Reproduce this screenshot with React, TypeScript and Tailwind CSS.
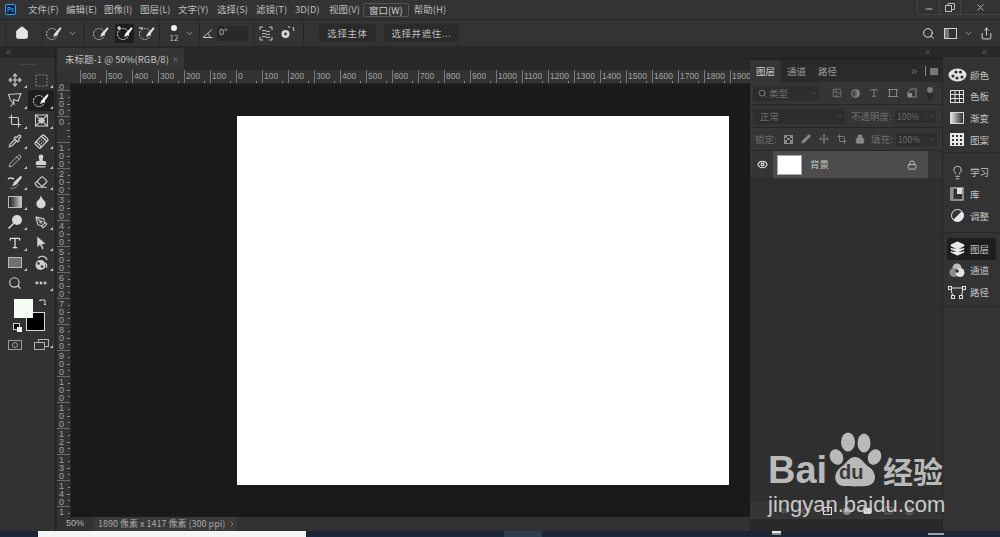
import type { ReactNode } from 'react'
import {
  Bandage,
  ChevronDown,
  ChevronRight,
  ChevronsLeft,
  ChevronsRight,
  Crop,
  Droplet,
  Ellipsis,
  Eraser,
  Eye,
  FolderClosed,
  Home,
  Image as ImageIcon,
  Layers,
  Lightbulb,
  Link2,
  Lock,
  Minus,
  Move,
  PenTool,
  Pencil,
  Pipette,
  Search,
  Share,
  SquareDashed,
  SquarePlus,
  Stamp,
  Trash2,
  Type,
  X,
} from 'lucide-react'

const cjk = { fontFamily: '"Noto Sans CJK SC", "Liberation Sans", sans-serif' }
const latin = { fontFamily: '"Liberation Sans", sans-serif' }

const menus = [
  { label: '文件(F)', w: 'w-[38px]' },
  { label: '编辑(E)', w: 'w-[38px]' },
  { label: '图像(I)', w: 'w-[36px]' },
  { label: '图层(L)', w: 'w-[38px]' },
  { label: '文字(Y)', w: 'w-[39px]' },
  { label: '选择(S)', w: 'w-[39px]' },
  { label: '滤镜(T)', w: 'w-[39px]' },
  { label: '3D(D)', w: 'w-[34px]' },
  { label: '视图(V)', w: 'w-[35px]' },
]

const hLabels = ['600', '500', '400', '300', '200', '100', '0', '100', '200', '300', '400', '500', '600', '700', '800', '900', '1000', '1100', '1200', '1300', '1400', '1500', '1600', '1700', '1800', '1900']
// the ruler only has room for three stacked digits, so 1000 and up read as 100/110/...
const vLabels = ['100', '0', '100', '200', '300', '400', '500', '600', '700', '800', '900', '100', '100', '120', '130', '140', '1']

function QuickSel({ mode, bright }: { mode?: '+' | '-'; bright?: boolean }) {
  return (
    <svg width="18" height="16" viewBox="0 0 18 16" fill="none">
      <circle cx="7" cy="9" r="5.5" stroke={bright ? '#e8e8e8' : '#c4c4c4'} strokeWidth="1" strokeDasharray="2 1" />
      <path d="M15.5 2 L9.5 8.5 L8 12 L11.5 10.5 L16.5 3.5 Z" fill={bright ? '#ffffff' : '#e4e4e4'} />
      {mode === '+' && <path d="M3 1v4M1 3h4" stroke="#fff" strokeWidth="1" />}
      {mode === '-' && <path d="M1 3h4" stroke="#fff" strokeWidth="1" />}
    </svg>
  )
}

function Lasso() {
  return (
    <svg width="16" height="16" viewBox="0 0 16 16" fill="none" stroke="#c8c8c8" strokeWidth="1.1">
      <path d="M1.5 2.5 L14 1.5 L11 9 L6.5 7.5 L7 12 L3.5 8 Z" />
      <path d="M3.5 14.5 L6.5 11" />
    </svg>
  )
}

function FrameTool() {
  return (
    <svg width="15" height="15" viewBox="0 0 15 15" fill="none" stroke="#c8c8c8" strokeWidth="1.1">
      <rect x="1.5" y="2" width="12" height="11" />
      <path d="M1.5 2 L13.5 13 M13.5 2 L1.5 13" />
      <path d="M4.5 7.5 L7.5 4.8 L10.5 7.5 L7.5 10.2 Z" fill="#c8c8c8" />
    </svg>
  )
}

function HealBrush() {
  return (
    <svg width="16" height="16" viewBox="0 0 16 16" fill="none">
      <path d="M14 1.5 L7 8 L5 12.5 L9.5 10.5 L15 3.5 Z" fill="#d4d4d4" />
      <path d="M1 5 C3 3 5 4 7 5" stroke="#d4d4d4" strokeWidth="1.5" />
      <path d="M3 14 C6 15 10 14 12 10" stroke="#8a8a8a" strokeWidth="1" />
    </svg>
  )
}

function Dodge() {
  return (
    <svg width="16" height="16" viewBox="0 0 16 16" fill="none">
      <circle cx="10" cy="6" r="5" fill="#d8d8d8" />
      <path d="M6.5 9.5 L1.5 14.5" stroke="#d8d8d8" strokeWidth="1.6" />
    </svg>
  )
}

function Arrow() {
  return (
    <svg width="13" height="15" viewBox="0 0 13 15">
      <path d="M2 1 L11 9 L7 9.5 L9 14 L7 14.5 L5 10 L2 12.5 Z" fill="#d4d4d4" stroke="#2a2a2a" strokeWidth="0.5" />
    </svg>
  )
}

function ShapeFx() {
  return (
    <svg width="16" height="16" viewBox="0 0 16 16" fill="none">
      <circle cx="7.5" cy="10" r="5" fill="#cfcfcf" />
      <circle cx="5.5" cy="8.5" r="1.3" fill="#323232" />
      <circle cx="9" cy="11.5" r="1.3" fill="#323232" />
      <path d="M5 3 C8 0 13 1 14 5 M12 8 C14 9 14 11 13 13" stroke="#cfcfcf" strokeWidth="1.2" />
    </svg>
  )
}

function Palette() {
  return (
    <svg width="19" height="14" viewBox="0 0 19 14">
      <ellipse cx="9.5" cy="7" rx="9" ry="6.5" fill="#e4e4e4" />
      <circle cx="5" cy="8" r="1.6" fill="#323232" />
      <circle cx="8" cy="4" r="1.6" fill="#323232" />
      <circle cx="12.5" cy="4" r="1.6" fill="#323232" />
      <circle cx="9" cy="10" r="1.6" fill="#323232" />
      <circle cx="14" cy="9" r="1.6" fill="#323232" />
    </svg>
  )
}

function Swatches() {
  return (
    <svg width="14" height="13" viewBox="0 0 14 13" fill="none" stroke="#e0e0e0" strokeWidth="1">
      <rect x="0.5" y="0.5" width="13" height="12" />
      <path d="M5 .5v12M9.5 .5v12M.5 4.5h13M.5 8.5h13" />
    </svg>
  )
}

function Pattern() {
  return (
    <svg width="14" height="13" viewBox="0 0 14 13">
      <rect width="14" height="13" fill="#e8e8e8" />
      <path d="M2 2h2v2H2zM6 2h2v2H6zM10 2h2v2h-2zM2 6h2v2H2zM6 6h2v2H6zM10 6h2v2h-2zM2 10h2v2H2zM6 10h2v2H6zM10 10h2v2h-2z" fill="#323232" />
    </svg>
  )
}

function LibraryIcon() {
  return (
    <svg width="14" height="14" viewBox="0 0 14 14" fill="none">
      <rect x="1" y="1" width="12" height="12" stroke="#c8c8c8" strokeWidth="1.2" />
      <rect x="1" y="1" width="2.5" height="12" fill="#8f8f8f" />
      <path d="M7 1h5v6H7z" fill="#e0e0e0" />
    </svg>
  )
}

function Adjust() {
  return (
    <svg width="13" height="13" viewBox="0 0 13 13">
      <circle cx="6.5" cy="6.5" r="6" fill="none" stroke="#e8e8e8" strokeWidth="1" />
      <path d="M10.8 2.2 A6 6 0 0 1 2.2 10.8 Z" fill="#e8e8e8" />
    </svg>
  )
}

function Channels() {
  return (
    <svg width="16" height="14" viewBox="0 0 16 14">
      <circle cx="8" cy="5" r="4.5" fill="#bdbdbd" />
      <circle cx="5" cy="9.5" r="4.5" fill="#8c8c8c" />
      <circle cx="11" cy="9.5" r="4.5" fill="#e2e2e2" />
      <circle cx="8" cy="8" r="1.8" fill="#323232" />
    </svg>
  )
}

function PathsIcon() {
  return (
    <svg width="18" height="13" viewBox="0 0 18 13" fill="none" stroke="#e0e0e0" strokeWidth="1">
      <path d="M2 2 C7 2 11 2 16 2 M2.5 2 L5 11 M15.5 2 L13 11" />
      <rect x="0.5" y="0.5" width="3" height="3" fill="#323232" />
      <rect x="14.5" y="0.5" width="3" height="3" fill="#323232" />
      <rect x="3.5" y="9.5" width="3" height="3" fill="#323232" />
      <rect x="11.5" y="9.5" width="3" height="3" fill="#323232" />
    </svg>
  )
}

function Tool({ children, corner = true, active }: { children: ReactNode; corner?: boolean; active?: boolean }) {
  return (
    <div className={`relative flex h-full items-center justify-center ${active ? 'rounded-[2px] bg-[#1f1f1f]' : ''}`}>
      {children}
      {corner && <span className="absolute bottom-[2px] right-[1px] h-0 w-0 border-b-[3px] border-l-[3px] border-b-[#c8c8c8] border-l-transparent" />}
    </div>
  )
}

function MenuBar() {
  return (
    <div className="flex h-[19px] items-center bg-[#333333] text-[9.5px] text-[#bdbdbd]">
      <div className="ml-[5px] mr-[12px] flex h-[11px] w-[11px] items-center justify-center rounded-[2px] border border-[#31a8ff] bg-[#001e36] text-[6px] font-bold leading-none text-[#31a8ff]">
        Ps
      </div>
      {menus.map((m) => (
        <span key={m.label} className={`${m.w} whitespace-nowrap`}>{m.label}</span>
      ))}
      <span className="ml-[-1px] mr-[5px] whitespace-nowrap rounded-[2px] border border-[#565656] px-[5px] leading-[12px] text-[#d0d0d0]">窗口(W)</span>
      <span className="whitespace-nowrap">帮助(H)</span>
      <div className="ml-auto flex h-[15px] w-[83px] items-center self-start rounded-bl-[3px] border-b border-l border-[#444444] text-[#bdbdbd]">
        <span className="flex h-full w-[22px] items-center justify-center border-r border-[#444444]"><Minus size={10} strokeWidth={2.4} className="mt-[3px]" /></span>
        <span className="flex h-full w-[21px] items-center justify-center border-r border-[#444444]">
          <svg width="10" height="9" viewBox="0 0 10 9" fill="none" stroke="#bdbdbd"><rect x="0.5" y="2.5" width="6" height="6" /><path d="M3 2.5V.5h6.5v6H7" /></svg>
        </span>
        <span className="flex flex-1 items-center justify-center"><X size={11} strokeWidth={2} /></span>
      </div>
    </div>
  )
}

function Sep({ ml }: { ml: string }) {
  return <span className={`${ml} h-[24px] w-px shrink-0 bg-[#262626]`} />
}

function OptionsBar() {
  return (
    <div className="flex h-[28px] items-center border-y border-[#262626] bg-[#333333] text-[9.5px] text-[#bdbdbd]">
      <Sep ml="ml-[5px]" />
      <Home size={14} fill="#e6e6e6" stroke="#e6e6e6" className="ml-[9px] shrink-0" />
      <Sep ml="ml-[13px]" />
      <span className="ml-[2px] flex shrink-0 items-center"><QuickSel /><ChevronDown size={9} className="ml-[5px]" /></span>
      <Sep ml="ml-[7px]" />
      <span className="ml-[7px] shrink-0"><QuickSel /></span>
      <span className="ml-[5px] flex h-[19px] w-[19px] shrink-0 items-center justify-center bg-[#1e1e1e]"><QuickSel mode="+" bright /></span>
      <span className="ml-[4px] shrink-0"><QuickSel mode="-" /></span>
      <Sep ml="ml-[3px]" />
      <span className="ml-[9px] flex w-[10px] shrink-0 flex-col items-center">
        <span className="h-[6px] w-[6px] rounded-full bg-[#efefef]" />
        <span className="mt-[2px] text-[8px] leading-[9px]">12</span>
      </span>
      <ChevronDown size={9} className="ml-[6px] shrink-0" />
      <Sep ml="ml-[5px]" />
      <svg width="11" height="9" viewBox="0 0 11 9" fill="none" stroke="#c8c8c8" className="ml-[2px] shrink-0"><path d="M10 .5 L1 8.5 H10.5 M6 4.5 C7 5.5 7.5 7 7.5 8.5" /></svg>
      <span className="ml-[4px] flex h-[15px] w-[31px] shrink-0 items-center bg-[#292929] pl-[2px] text-[9px]" style={latin}>0°</span>
      <Sep ml="ml-[5px]" />
      <svg width="14" height="15" viewBox="0 0 14 15" fill="none" stroke="#c8c8c8" className="ml-[5px] shrink-0"><path d="M1 1h3M10 1h3M1 14h3M10 14h3M1 1v3M13 1v3M1 14v-3M13 14v-3" /><path d="M3 5 C6 3 8 7 11 5 M3 8 C6 6 8 10 11 8 M3 11 C6 9 8 13 11 11" /></svg>
      <svg width="15" height="14" viewBox="0 0 15 14" className="ml-[7px] shrink-0"><circle cx="5.5" cy="8" r="4" fill="#d8d8d8" /><circle cx="5.5" cy="8" r="1.4" fill="#333" /><path d="M8 1h2M13 1l1 4" stroke="#c8c8c8" fill="none" /></svg>
      <Sep ml="ml-[8px]" />
      <button type="button" className="ml-[15px] h-[18px] w-[57px] shrink-0 rounded-[2px] border border-[#2c2c2c] bg-[#2a2a2a] text-[9.5px] tracking-[0.6px]">选择主体</button>
      <button type="button" className="ml-[8px] h-[18px] w-[75px] shrink-0 rounded-[2px] border border-[#2c2c2c] bg-[#2a2a2a] text-[9.5px] tracking-[0.6px]">选择并遮住...</button>
      <div className="ml-auto flex items-center">
        <Search size={13} strokeWidth={1.8} className="text-[#e0e0e0]" />
        <span className="ml-[9px] flex h-[11px] w-[13px] border border-[#d0d0d0]"><span className="h-full w-[4px] bg-[#777]" /></span>
        <ChevronDown size={9} className="ml-[7px]" />
        <Share size={13} strokeWidth={1.7} className="ml-[7px] mr-[7px] text-[#e0e0e0]" />
      </div>
    </div>
  )
}

function Toolbox() {
  return (
    <div className="flex w-[56px] shrink-0 flex-col border-r border-[#222222] bg-[#323232]">
      <div className="flex h-[11px] items-center bg-[#282828] pl-[5px] text-[#8a8a8a]"><ChevronsLeft size={7} /></div>
      <div className="flex h-[12px] items-center justify-center"><span className="h-px w-[16px] bg-[#444]" /></div>
      <div className="ml-[2px] grid grid-cols-[26px_26px] auto-rows-[20.3px]">
        <Tool><Move size={14} className="text-[#d0d0d0]" /></Tool>
        <Tool><SquareDashed size={15} className="text-[#c0c0c0]" strokeWidth={1.2} /></Tool>
        <Tool><Lasso /></Tool>
        <Tool active><QuickSel bright /></Tool>
        <Tool><Crop size={14} className="text-[#d0d0d0]" /></Tool>
        <Tool><FrameTool /></Tool>
        <Tool><Pipette size={14} className="text-[#d0d0d0]" /></Tool>
        <Tool><Bandage size={15} className="-rotate-45 text-[#d0d0d0]" /></Tool>
        <Tool><Pencil size={14} className="text-[#d0d0d0]" strokeWidth={1.4} /></Tool>
        <Tool><Stamp size={14} fill="#d0d0d0" className="text-[#d0d0d0]" /></Tool>
        <Tool><HealBrush /></Tool>
        <Tool><Eraser size={14} className="text-[#d0d0d0]" /></Tool>
        <Tool><span className="h-[12px] w-[14px] border border-[#bbbbbb] bg-gradient-to-r from-[#222222] to-[#cccccc]" /></Tool>
        <Tool><Droplet size={14} fill="#d8d8d8" className="text-[#d8d8d8]" /></Tool>
        <Tool><Dodge /></Tool>
        <Tool><PenTool size={13} className="text-[#d0d0d0]" /></Tool>
        <Tool><Type size={14} strokeWidth={2.2} className="text-[#e0e0e0]" /></Tool>
        <Tool><Arrow /></Tool>
        <Tool><span className="h-[11px] w-[14px] border border-[#bbbbbb] bg-[#707070]" /></Tool>
        <Tool><ShapeFx /></Tool>
        <Tool corner={false}><Search size={14} className="text-[#d0d0d0]" /></Tool>
        <Tool><Ellipsis size={14} strokeWidth={3} className="text-[#d0d0d0]" /></Tool>
      </div>
      <div className="relative ml-[14px] mt-[6px] h-[33px] w-[36px]">
        <span className="absolute left-[12px] top-[13px] h-[19px] w-[19px] border border-[#d8d8d8] bg-black" />
        <span className="absolute left-0 top-0 h-[19px] w-[19px] bg-[#f6fdf4]" />
        <svg width="9" height="9" viewBox="0 0 9 9" fill="none" stroke="#d0d0d0" className="absolute left-[25px] top-[-1px]"><path d="M1 2h5v5M0 3l1-1 1 1M5 6l1 1 1-1" /></svg>
        <span className="absolute left-0 top-[25px] h-[5px] w-[5px] bg-black outline outline-1 outline-[#d0d0d0]" />
        <span className="absolute left-[3px] top-[28px] h-[5px] w-[5px] bg-[#efefef]" />
      </div>
      <div className="ml-[2px] mt-[7px] grid grid-cols-[26px_26px]">
        <Tool corner={false}><span className="flex h-[10px] w-[14px] items-center justify-center border border-[#9a9a9a]"><span className="h-[6px] w-[6px] rounded-full border border-[#9a9a9a]" /></span></Tool>
        <Tool><svg width="15" height="11" viewBox="0 0 15 11" fill="#323232" stroke="#b0b0b0"><rect x="4.5" y="0.5" width="10" height="7" /><rect x="0.5" y="3.5" width="10" height="7" /></svg></Tool>
      </div>
    </div>
  )
}

function Rulers() {
  return (
    <div className="flex h-[14px] overflow-hidden border-b border-[#262626] bg-[#323232] pl-[23px] text-[8.5px] leading-[13px] text-[#a4a4a4]" style={latin}>
      {hLabels.map((l, i) => (
        <span key={i} className="relative w-[26px] shrink-0 border-l border-[#7a7a7a] pl-px">
          {l}
          <span className="absolute bottom-0 left-[19px] h-[2px] w-px bg-[#8a8a8a]" />
        </span>
      ))}
    </div>
  )
}

function VerticalRuler() {
  return (
    <div className="flex w-[14px] shrink-0 flex-col overflow-hidden border-r border-[#262626] bg-[#323232] text-[9px] leading-[8px] text-[#a4a4a4]" style={latin}>
      <span className="flex h-[6px] shrink-0 items-end pl-[2px] leading-[6px]">0</span>
      {vLabels.map((l, i) => (
        <div key={i} className="relative h-[26px] shrink-0 border-t border-[#6a6a6a] pl-[2px] pt-[1px]">
          {l.split('').map((d, j) => <div key={j}>{d}</div>)}
          <span className="absolute right-0 top-[6px] h-px w-[2px] bg-[#8a8a8a]" />
          <span className="absolute right-0 top-[13px] h-px w-[3px] bg-[#8a8a8a]" />
          <span className="absolute right-0 top-[19px] h-px w-[2px] bg-[#8a8a8a]" />
        </div>
      ))}
    </div>
  )
}

function DocumentArea() {
  return (
    <div className="ml-[1px] flex w-[693px] shrink-0 flex-col">
      <div className="flex h-[23px] bg-[#282828]">
        <div className="mt-[1px] flex w-[127px] items-center bg-[#353535] pl-[8px] text-[9.5px] text-[#c4c4c4]">
          未标题-1 @ 50%(RGB/8)
          <X size={7} className="ml-[3px] text-[#a0a0a0]" />
        </div>
      </div>
      <Rulers />
      <div className="flex min-h-0 flex-1">
        <VerticalRuler />
        <div className="flex-1 bg-[#1a1a1a] pl-[166px] pt-[32px]">
          <div className="h-[369px] w-[492px] bg-white" />
        </div>
      </div>
      <div className="flex h-[14px] items-center bg-[#323232] text-[9px] text-[#b4b4b4]">
        <span className="ml-[9px] w-[28px]" style={latin}>50%</span>
        <span className="flex h-full w-[143px] items-center bg-[#3a3a3a] pl-[4px] text-[9px] text-[#a8a8a8]">
          1890 像素 x 1417 像素 (300 ppi)
          <ChevronRight size={8} className="ml-auto mr-[1px]" />
        </span>
      </div>
    </div>
  )
}

function LayersPanel() {
  return (
    <div className="flex w-[192px] shrink-0 flex-col bg-[#282828]">
      <div className="flex h-[10px] shrink-0 items-center justify-end pr-[11px] text-[#8a8a8a]"><ChevronsLeft size={7} /></div>
      <div className="mb-[12px] flex flex-1 flex-col border-t-[3px] border-[#222222] bg-[#2f2f2f]">
        <div className="flex h-[22px] items-stretch bg-[#2a2a2a] text-[9.5px] text-[#9a9a9a]">
          <span className="flex w-[31px] items-center justify-center bg-[#353535] text-[#d0d0d0]">图层</span>
          <span className="flex w-[31px] items-center justify-center">通道</span>
          <span className="flex w-[31px] items-center justify-center">路径</span>
          <ChevronsRight size={9} className="ml-auto self-center" />
          <span className="ml-[6px] h-[10px] w-px self-center bg-[#888]" />
          <span className="mx-[4px] flex h-[7px] w-[8px] flex-col justify-between self-center bg-[#777]" />
        </div>
        <div className="flex h-[23px] items-center border-b border-[#262626] bg-[#353535] pl-[3px] text-[#7e7e7e]">
          <span className="flex h-[15px] w-[66px] items-center rounded-[2px] bg-[#2d2d2d] pl-[5px] text-[9.5px] text-[#6f6f6f]">
            <Search size={9} className="mr-[2px] text-[#8a8a8a]" />类型<ChevronDown size={7} className="ml-auto mr-[2px]" />
          </span>
          <ImageIcon size={10} className="ml-[13px]" />
          <span className="ml-[9px] h-[9px] w-[9px] rounded-full border border-[#8a8a8a] bg-gradient-to-r from-transparent to-[#8a8a8a]" />
          <Type size={10} className="ml-[9px]" strokeWidth={2.4} />
          <svg width="10" height="10" viewBox="0 0 10 10" fill="none" stroke="#8a8a8a" className="ml-[9px]"><rect x="1.5" y="1.5" width="7" height="7" /><path d="M0 1.5h3M7 1.5h3M0 8.5h3M7 8.5h3" /></svg>
          <svg width="10" height="10" viewBox="0 0 10 10" className="ml-[9px]"><path d="M1 9V4l3-3h5v8z" fill="none" stroke="#8a8a8a" /><path d="M1 5h4v4H1z" fill="#8a8a8a" /></svg>
          <span className="ml-[10px] flex h-[13px] w-[6px] flex-col items-center rounded-full bg-[#2a2a2a]"><span className="h-[6px] w-[6px] rounded-full bg-[#7a7a7a]" /></span>
        </div>
        <div className="flex h-[23px] items-center border-b border-[#262626] bg-[#353535] pl-[3px] text-[9.5px] text-[#6e6e6e]">
          <span className="flex h-[15px] w-[92px] items-center rounded-[2px] bg-[#2d2d2d] pl-[7px]">正常<ChevronDown size={7} className="ml-auto mr-[2px]" /></span>
          <span className="ml-[6px] w-[44px] whitespace-nowrap">不透明度:</span>
          <span className="flex h-[13px] w-[30px] items-center bg-[#2d2d2d] pl-[2px] text-[8.5px]">100%</span>
          <span className="ml-[1px] flex h-[13px] w-[10px] items-center justify-center bg-[#2d2d2d]"><ChevronDown size={7} /></span>
        </div>
        <div className="flex h-[23px] items-center border-b border-[#262626] bg-[#353535] pl-[5px] text-[9.5px] text-[#6e6e6e]">
          <span className="w-[22px] whitespace-nowrap">锁定:</span>
          <span className="ml-[7px] grid h-[9px] w-[9px] grid-cols-3 border border-[#8a8a8a]">
            <i className="bg-[#8a8a8a]" /><i /><i className="bg-[#8a8a8a]" /><i /><i className="bg-[#8a8a8a]" /><i /><i className="bg-[#8a8a8a]" /><i /><i className="bg-[#8a8a8a]" />
          </span>
          <Pencil size={10} className="ml-[8px] text-[#8a8a8a]" fill="#8a8a8a" />
          <Move size={10} className="ml-[8px] text-[#8a8a8a]" />
          <Crop size={10} className="ml-[8px] text-[#8a8a8a]" />
          <Lock size={10} className="ml-[8px] text-[#8a8a8a]" fill="#8a8a8a" />
          <span className="ml-[6px] w-[23px] whitespace-nowrap">填充:</span>
          <span className="ml-[2px] flex h-[13px] w-[30px] items-center bg-[#2d2d2d] pl-[2px] text-[8.5px]">100%</span>
          <span className="ml-[1px] flex h-[13px] w-[10px] items-center justify-center bg-[#2d2d2d]"><ChevronDown size={7} /></span>
        </div>
        <div className="flex h-[27px] items-center bg-[#353535] pr-[14px]">
          <Eye size={11} strokeWidth={2.4} className="ml-[7px] text-[#e4e4e4]" />
          <div className="ml-[5px] flex h-full flex-1 items-center bg-[#4c4c4c] pl-[4px] text-[9.5px] text-[#c8c8c8]">
            <span className="h-[20px] w-[25px] border border-[#a8a8a8] bg-white" />
            <span className="ml-[8px]">背景</span>
            <Lock size={10} className="ml-auto mr-[11px] text-[#d0d0d0]" />
          </div>
        </div>
        <div className="flex-1" />
        <div className="flex h-[17px] items-center border-y border-[#3a3a3a] bg-[#353535] pl-[30px] text-[#8a8a8a]">
          <Link2 size={9} />
          <span className="ml-[13px] h-[6px] w-[8px] rounded-full border border-[#777777]" />
          <span className="ml-[13px] h-[8px] w-[9px] border border-[#dddddd]" />
          <span className="ml-[11px] h-[8px] w-[8px] rounded-full bg-[#8a8a8a]" />
          <FolderClosed size={9} className="ml-[12px] text-[#e0e0e0]" fill="#e0e0e0" />
          <SquarePlus size={9} className="ml-[12px]" />
          <Trash2 size={9} className="ml-[12px]" />
        </div>
      </div>
    </div>
  )
}

function DockItem({ icon, label, active }: { icon: ReactNode; label: string; active?: boolean }) {
  return (
    <div className={`mx-[4px] flex h-[21.7px] items-center rounded-[2px] ${active ? 'bg-[#1e1e1e]' : ''}`}>
      <span className="flex w-[20px] justify-center">{icon}</span>
      <span className="ml-[3px]">{label}</span>
    </div>
  )
}

function Dock() {
  return (
    <div className="flex flex-1 flex-col border-l border-[#262626] bg-[#333333] text-[9.5px] text-[#c4c4c4]">
      <div className="flex h-[10px] items-center justify-end bg-[#282828] pr-[12px] text-[#8a8a8a]"><ChevronsLeft size={7} /></div>
      <div className="h-[7px]" />
      <div className="border-b border-[#262626] pb-[1px]">
        <DockItem icon={<Palette />} label="颜色" />
        <DockItem icon={<Swatches />} label="色板" />
        <DockItem icon={<span className="h-[12px] w-[14px] border border-[#d8d8d8] bg-gradient-to-r from-[#e8e8e8] to-[#333333]" />} label="渐变" />
        <DockItem icon={<Pattern />} label="图案" />
      </div>
      <div className="mt-[9px] border-b border-[#262626] pb-[5px]">
        <DockItem icon={<Lightbulb size={15} strokeWidth={1.3} className="text-[#e0e0e0]" />} label="学习" />
        <DockItem icon={<LibraryIcon />} label="库" />
        <DockItem icon={<Adjust />} label="调整" />
      </div>
      <div className="mt-[5px] border-b border-[#262626] pb-[3px]">
        <DockItem active icon={<Layers size={15} fill="#e8e8e8" className="text-[#e8e8e8]" />} label="图层" />
        <DockItem icon={<Channels />} label="通道" />
        <DockItem icon={<PathsIcon />} label="路径" />
      </div>
    </div>
  )
}

function TaskStrip() {
  return (
    <div className="flex h-[6px] bg-[#1b2637]">
      <div className="ml-[38px] w-[268px] bg-[#f4f6f4]" />
      <div className="ml-[198px] w-[38px] bg-[#2f3e4e]" />
      <div className="ml-[230px] h-[4px] w-[9px] border-t-2 border-[#e8e8e8] bg-[#8a8a8a]" />
      <div className="ml-[147px] mt-[2px] h-[2px] w-[16px] bg-[#9aa0a6]" />
    </div>
  )
}

// baidu watermark sits over the bottom right corner
function Watermark() {
  return (
    <div className="pointer-events-none absolute left-[768px] top-[429px] h-[90px] w-[180px]">
      <span className="absolute left-0 top-[20px] text-[38px] font-bold leading-[42px] text-[#b9b9b9]" style={latin}>Bai</span>
      <svg width="60" height="70" viewBox="0 0 60 70" className="absolute left-[60px] top-0">
        <ellipse cx="20" cy="13" rx="7" ry="9.5" fill="#b9b9b9" />
        <ellipse cx="36" cy="14" rx="6.5" ry="9.5" fill="#b9b9b9" />
        <ellipse cx="8.5" cy="28" rx="6.5" ry="8" fill="#b9b9b9" transform="rotate(-25 8.5 28)" />
        <ellipse cx="46.5" cy="28" rx="6.5" ry="8" fill="#b9b9b9" transform="rotate(25 46.5 28)" />
        <path d="M27 28 C33 28 35 34 41 38 C49 43 50 56 38 57 C32 57.500 22 57.500 16 57 C5 56 5 44 13 38 C19 34 21 28 27 28 Z" fill="#b9b9b9" />
      </svg>
      <span className="absolute left-[71px] top-[31px] text-[20px] font-bold leading-[24px] text-[#3a3a3a]" style={latin}>du</span>
      <span className="absolute left-[115px] top-[21px] whitespace-nowrap text-[30px] font-bold leading-[40px] text-[#b9b9b9]" style={cjk}>经验</span>
      <span className="absolute left-0 top-[63px] whitespace-nowrap text-[22px] leading-[26px] text-[#c9c9c9]" style={latin}>jingyan.baidu.com</span>
    </div>
  )
}

export default function App() {
  return (
    <div className="relative flex h-[537px] w-[1000px] flex-col overflow-hidden bg-[#282828]" style={cjk}>
      <MenuBar />
      <OptionsBar />
      <div className="flex min-h-0 flex-1">
        <Toolbox />
        <DocumentArea />
        <LayersPanel />
        <Dock />
      </div>
      <TaskStrip />
      <Watermark />
    </div>
  )
}
